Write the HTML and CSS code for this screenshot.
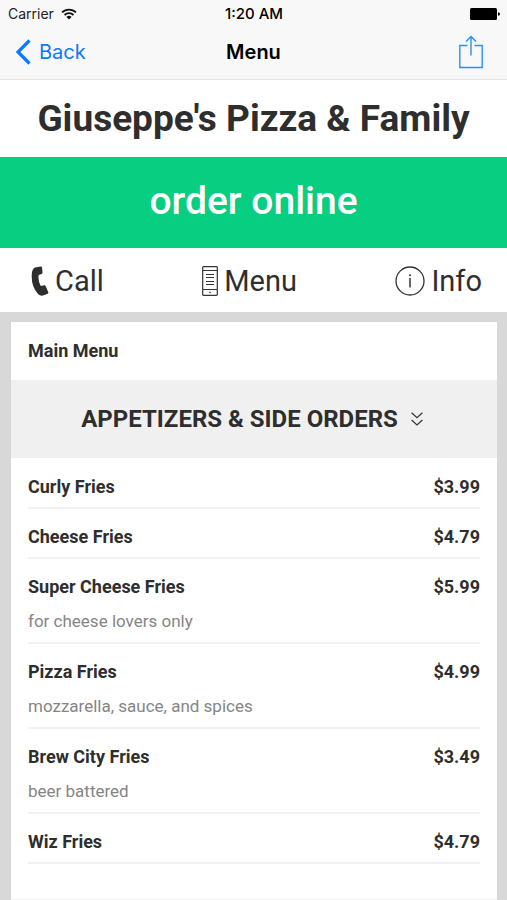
FILE: index.html
```html
<!DOCTYPE html>
<html lang="en">
<head>
    <meta charset="UTF-8">
    <meta name="viewport" content="width=device-width, initial-scale=1.0">
    <title>Menu - Giuseppe's Pizza &amp; Family</title>
    <link rel="stylesheet" href="styles.css">
</head>
<body>

    <div class="top-bar">
        <div class="status">
            <div class="carrier">
                <span>Carrier</span>
                <svg class="wifi" viewBox="0 0 16 12">
                    <path d="M1 4.4a10 10 0 0 1 14 0M3.5 7a6.4 6.4 0 0 1 9 0" fill="none" stroke="#111" stroke-width="1.8"/>
                    <path d="M8 11.6L5.4 9a3.7 3.7 0 0 1 5.2 0z" fill="#111"/>
                </svg>
            </div>
            <span class="time">1:20 AM</span>
            <svg class="battery" viewBox="0 0 30 12">
                <rect x="0" y="0" width="27" height="12" rx="1.5"/>
                <path d="M28 4.2q2 .3 2 1.8t-2 1.8z"/>
            </svg>
        </div>
        <div class="nav">
            <a href="#" class="back">
                <svg viewBox="0 0 16 26"><path d="M14.5 1.5L3 13l11.5 11.5" fill="none" stroke="#0a7aff" stroke-width="3.2"/></svg>
                <span>Back</span>
            </a>
            <h2>Menu</h2>
            <button type="button" class="share" aria-label="Share">
                <svg viewBox="0 0 26 34"><path d="M9.5 10.5H1.8v22h22.4v-22h-7.7M13 20.5V1.5M8 6.500l5-5 5 5" fill="none" stroke="#2b8cff" stroke-width="1.4"/></svg>
            </button>
        </div>
    </div>

    <h1>Giuseppe's Pizza &amp; Family</h1>
    <a href="#" class="order-btn">order online</a>

    <div class="links">
        <a href="#">
            <svg class="phone" viewBox="0 0 18 30"><path d="M4 1.500L9.800.4q1 0 1.200.9l.5 5.500q0 .9-.9 1.200l-3 1Q6.800 14.500 9.800 20l3.400-.7q1-.1 1.400.7l2.700 6.300q.3 1-.6 1.400l-4.700 1.800q-2.800.7-5-1.600Q0 20.500.8 8 1 3 4 1.500z" fill="#2e2e2e"/></svg>
            <span>Call</span>
        </a>
        <a href="#">
            <svg class="device" viewBox="0 0 16 30">
                <path d="M1.5.7h13q.8 0 .8.8v27q0 .8-.8.8h-13q-.8 0-.8-.8v-27q0-.8.8-.8zM.7 4.500h14.600M.7 23.500h14.600M4 8.500h8M4 11.500h8M4 15.500h8M4 18.500h8" fill="none" stroke="#333" stroke-width="1.2"/>
                <circle cx="8" cy="26.4" r=".8" fill="#333"/>
            </svg>
            <span>Menu</span>
        </a>
        <a href="#">
            <svg class="info" viewBox="0 0 30 30">
                <circle cx="15" cy="15" r="14" fill="none" stroke="#333" stroke-width="1.3"/>
                <path d="M15 12v9.500" stroke="#333" stroke-width="1.5"/>
                <circle cx="15" cy="9.3" r="1" fill="#333"/>
            </svg>
            <span>Info</span>
        </a>
    </div>

    <div class="container">
        <div class="card">
            <h3>Main Menu</h3>
            <button type="button" class="section">
                <span>APPETIZERS &amp; SIDE ORDERS</span>
                <svg viewBox="0 0 12 14"><path d="M.6.8L6 5.800l5.400-5M.6 8L6 13l5.400-5" fill="none" stroke="#333" stroke-width="1.2"/></svg>
            </button>
            <ul class="items">
                <li>
                    <div class="row"><span>Curly Fries</span><span>$3.99</span></div>
                </li>
                <li>
                    <div class="row"><span>Cheese Fries</span><span>$4.79</span></div>
                </li>
                <li>
                    <div class="row"><span>Super Cheese Fries</span><span>$5.99</span></div>
                    <p>for cheese lovers only</p>
                </li>
                <li>
                    <div class="row"><span>Pizza Fries</span><span>$4.99</span></div>
                    <p>mozzarella, sauce, and spices</p>
                </li>
                <li>
                    <div class="row"><span>Brew City Fries</span><span>$3.49</span></div>
                    <p>beer battered</p>
                </li>
                <li>
                    <div class="row"><span>Wiz Fries</span><span>$4.79</span></div>
                </li>
            </ul>
        </div>
    </div>

</body>
</html>
```
FILE: styles.css
```css
* {
    margin: 0;
    padding: 0;
    box-sizing: border-box;
}
body {
    background: #d8d8d8;
    color: #2e2e2e;
    font-family: Roboto, Arial, sans-serif;
    min-height: 100vh;
    display: flex;
    flex-direction: column;
}
a {
    color: inherit;
    text-decoration: none;
}
button {
    border: none;
    background: none;
    color: inherit;
    font-family: inherit;
    cursor: pointer;
}
svg {
    display: block;
    flex-shrink: 0;
}
.top-bar {
    background: #f8f8f8;
    border-bottom: 1px solid #e4e4e4;
    color: #000;
    font-family: Inter, Arial, sans-serif;
}
.status, .nav {
    display: grid;
    grid-template-columns: 1fr auto 1fr;
    align-items: center;
}
.status {
    padding: 0 7px 0 8px;
    height: 27px;
    font-size: 14px;
}
.carrier {
    display: flex;
    align-items: center;
    gap: 7px;
    color: #222;
}
.wifi {
    width: 16px;
    height: 12px;
}
.time {
    font-size: 15px;
    font-weight: 500;
}
.battery {
    width: 30px;
    height: 12px;
    justify-self: end;
}
.nav {
    height: 52px;
    padding: 0 15px 2px;
}
.back {
    display: flex;
    align-items: center;
    gap: 8px;
    color: #0a7aff;
    font-size: 20px;
}
.back svg {
    width: 16px;
    height: 26px;
}
.nav h2 {
    font-size: 20px;
    font-weight: 600;
}
.share {
    justify-self: end;
    padding-right: 8px;
}
.share svg {
    width: 26px;
    height: 34px;
}
h1 {
    background: white;
    font-size: 37px;
    line-height: 77px;
    text-align: center;
}
.order-btn {
    background: #07ce81;
    color: white;
    font-size: 39px;
    font-weight: 500;
    line-height: 48px;
    padding: 20px 0 23px;
    text-align: center;
}
.links {
    background: white;
    display: flex;
    justify-content: space-between;
    padding: 2px 25px 0 31px;
    height: 64px;
}
.links a {
    display: flex;
    align-items: center;
    gap: 6px;
    font-size: 29px;
}
.phone {
    width: 18px;
    height: 30px;
}
.device {
    width: 16px;
    height: 30px;
}
.info {
    width: 30px;
    height: 30px;
}
.container {
    flex: 1;
    display: flex;
    padding: 10px 10px 0 11px;
}
.card {
    flex: 1;
    background: white;
    border-bottom: 1px solid #f0f0f0;
}
h3 {
    font-size: 18px;
    line-height: 58px;
    padding: 0 17px;
}
.section {
    display: flex;
    align-items: center;
    justify-content: center;
    gap: 13px;
    width: 100%;
    height: 78px;
    padding-right: 4px;
    background: #f0f0f0;
    font-size: 24px;
    font-weight: bold;
}
.section svg {
    width: 12px;
    height: 14px;
}
.items {
    list-style: none;
    padding: 1px 17px 31px;
}
.items li {
    border-bottom: 2px solid #f2f2f2;
    padding: 17px 0 9px;
}
.row {
    display: flex;
    justify-content: space-between;
    font-size: 18px;
    font-weight: bold;
    line-height: 22px;
}
.items p {
    color: #858585;
    font-size: 17px;
    line-height: 24px;
    padding-top: 11px;
}
```
